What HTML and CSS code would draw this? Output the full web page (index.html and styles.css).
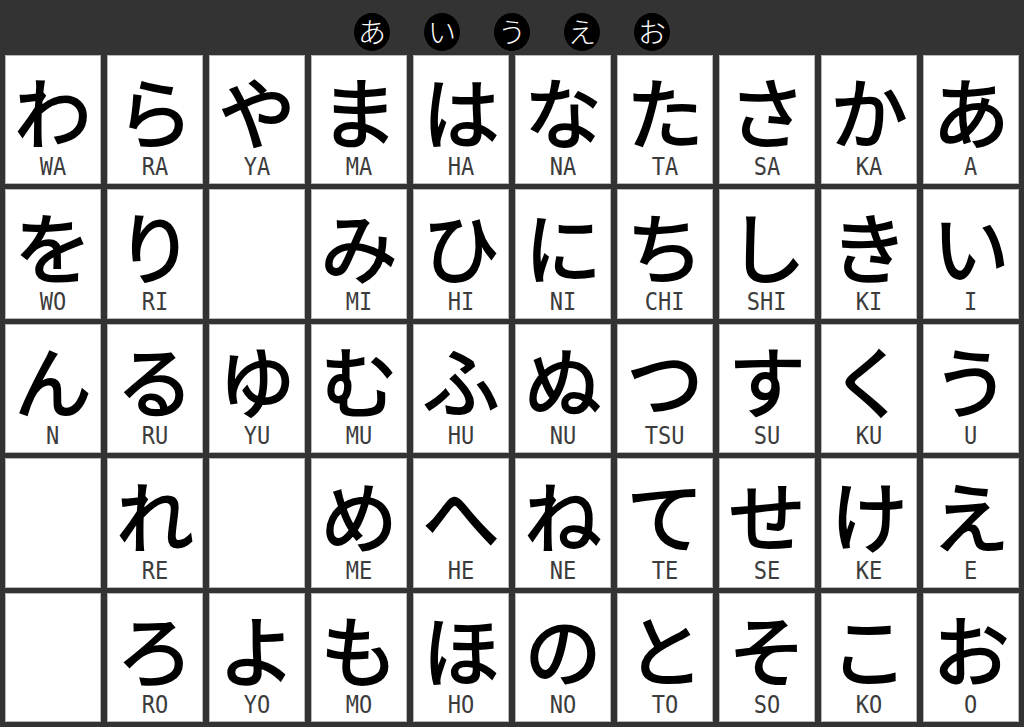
FILE: index.html
```html
<!DOCTYPE html>
<html lang="ja">
  <head>
    <meta charset="UTF-8" />
    <meta name="viewport" content="width=device-width, initial-scale=1.0" />
    <title>Hiragana Chart</title>
    <link rel="stylesheet" href="styles.css">
  </head>
  <body>
    <div class="header">
      <span class="vowel">あ</span>
      <span class="vowel">い</span>
      <span class="vowel">う</span>
      <span class="vowel">え</span>
      <span class="vowel">お</span>
    </div>

    <div class="chart">
      <!-- row a -->
      <div class="cell"><span class="kana">わ</span><span class="romaji">WA</span></div>
      <div class="cell"><span class="kana">ら</span><span class="romaji">RA</span></div>
      <div class="cell"><span class="kana">や</span><span class="romaji">YA</span></div>
      <div class="cell"><span class="kana">ま</span><span class="romaji">MA</span></div>
      <div class="cell"><span class="kana">は</span><span class="romaji">HA</span></div>
      <div class="cell"><span class="kana">な</span><span class="romaji">NA</span></div>
      <div class="cell"><span class="kana">た</span><span class="romaji">TA</span></div>
      <div class="cell"><span class="kana">さ</span><span class="romaji">SA</span></div>
      <div class="cell"><span class="kana">か</span><span class="romaji">KA</span></div>
      <div class="cell"><span class="kana">あ</span><span class="romaji">A</span></div>
      <!-- row i -->
      <div class="cell"><span class="kana">を</span><span class="romaji">WO</span></div>
      <div class="cell"><span class="kana">り</span><span class="romaji">RI</span></div>
      <div class="cell"></div>
      <div class="cell"><span class="kana">み</span><span class="romaji">MI</span></div>
      <div class="cell"><span class="kana">ひ</span><span class="romaji">HI</span></div>
      <div class="cell"><span class="kana">に</span><span class="romaji">NI</span></div>
      <div class="cell"><span class="kana">ち</span><span class="romaji">CHI</span></div>
      <div class="cell"><span class="kana">し</span><span class="romaji">SHI</span></div>
      <div class="cell"><span class="kana">き</span><span class="romaji">KI</span></div>
      <div class="cell"><span class="kana">い</span><span class="romaji">I</span></div>
      <!-- row u -->
      <div class="cell"><span class="kana">ん</span><span class="romaji">N</span></div>
      <div class="cell"><span class="kana">る</span><span class="romaji">RU</span></div>
      <div class="cell"><span class="kana">ゆ</span><span class="romaji">YU</span></div>
      <div class="cell"><span class="kana">む</span><span class="romaji">MU</span></div>
      <div class="cell"><span class="kana">ふ</span><span class="romaji">HU</span></div>
      <div class="cell"><span class="kana">ぬ</span><span class="romaji">NU</span></div>
      <div class="cell"><span class="kana">つ</span><span class="romaji">TSU</span></div>
      <div class="cell"><span class="kana">す</span><span class="romaji">SU</span></div>
      <div class="cell"><span class="kana">く</span><span class="romaji">KU</span></div>
      <div class="cell"><span class="kana">う</span><span class="romaji">U</span></div>
      <!-- row e -->
      <div class="cell"></div>
      <div class="cell"><span class="kana">れ</span><span class="romaji">RE</span></div>
      <div class="cell"></div>
      <div class="cell"><span class="kana">め</span><span class="romaji">ME</span></div>
      <div class="cell"><span class="kana">へ</span><span class="romaji">HE</span></div>
      <div class="cell"><span class="kana">ね</span><span class="romaji">NE</span></div>
      <div class="cell"><span class="kana">て</span><span class="romaji">TE</span></div>
      <div class="cell"><span class="kana">せ</span><span class="romaji">SE</span></div>
      <div class="cell"><span class="kana">け</span><span class="romaji">KE</span></div>
      <div class="cell"><span class="kana">え</span><span class="romaji">E</span></div>
      <!-- row o -->
      <div class="cell"></div>
      <div class="cell"><span class="kana">ろ</span><span class="romaji">RO</span></div>
      <div class="cell"><span class="kana">よ</span><span class="romaji">YO</span></div>
      <div class="cell"><span class="kana">も</span><span class="romaji">MO</span></div>
      <div class="cell"><span class="kana">ほ</span><span class="romaji">HO</span></div>
      <div class="cell"><span class="kana">の</span><span class="romaji">NO</span></div>
      <div class="cell"><span class="kana">と</span><span class="romaji">TO</span></div>
      <div class="cell"><span class="kana">そ</span><span class="romaji">SO</span></div>
      <div class="cell"><span class="kana">こ</span><span class="romaji">KO</span></div>
      <div class="cell"><span class="kana">お</span><span class="romaji">O</span></div>
    </div>
  </body>
</html>
```

FILE: styles.css
```css
* {
  margin: 0;
  padding: 0;
  box-sizing: border-box;
}
:root {
  --board-color: #333333;
  --cell-color: #ffffff;
  --ink-color: #000000;
  --label-color: #3c3c3c;
}
body {
  background: var(--board-color);
  width: 1024px;
  height: 727px;
  overflow: hidden;
  font-family: "Noto Sans CJK JP", sans-serif;
}
.header {
  height: 55px;
  padding-top: 13px;
  display: flex;
  justify-content: center;
  gap: 34px;
}
.vowel {
  width: 36px;
  height: 38px;
  border-radius: 50%;
  background: #000;
  color: #fff;
  font-size: 28px;
  font-weight: 300;
  line-height: 36px;
  text-align: center;
}
.chart {
  height: 667px;
  padding: 0 5px;
  display: grid;
  grid-template-columns: repeat(10, 1fr);
  grid-template-rows: repeat(5, 1fr);
  column-gap: 6px;
  row-gap: 5px;
}
.cell {
  background: var(--cell-color);
  border: 1px solid #b8b8b8;
  display: flex;
  flex-direction: column;
  align-items: center;
  justify-content: flex-end;
  padding-bottom: 3px;
}
.kana {
  color: var(--ink-color);
  font-size: 77px;
  font-weight: 400;
  line-height: 78px;
  margin-bottom: 5px;
  -webkit-text-stroke: 1.8px var(--ink-color);
}
.romaji {
  display: inline-block;
  color: var(--label-color);
  font-family: "DejaVu Sans Mono", monospace;
  font-size: 25px;
  line-height: 26px;
  transform: scaleX(0.88);
}
```
